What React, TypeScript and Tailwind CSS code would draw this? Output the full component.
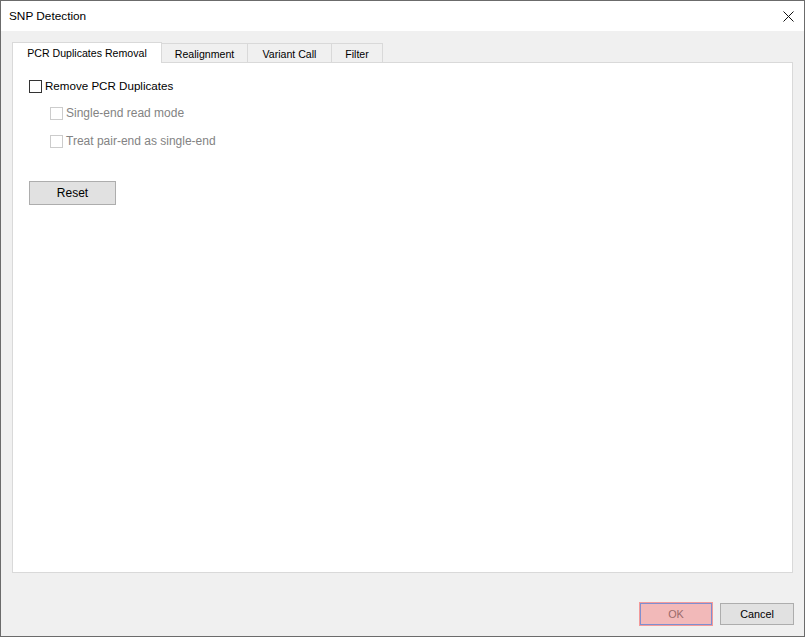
const tabs = ["PCR Duplicates Removal", "Realignment", "Variant Call", "Filter"];
const tabWidths = ["w-[150px]", "w-[87px]", "w-[85px]", "w-[52px]"];

function CheckRow({
  label,
  disabled,
  className,
  textClass,
}: {
  label: string;
  disabled?: boolean;
  className?: string;
  textClass?: string;
}) {
  return (
    <label className={`flex h-[18px] items-center gap-[3px] ${className ?? ""}`}>
      <span
        className={`h-[13px] w-[13px] border bg-white ${disabled ? "border-[#cccccc]" : "border-[#333333]"}`}
      />
      <span className={`${disabled ? "text-[#838383]" : "text-black"} ${textClass ?? ""}`}>{label}</span>
    </label>
  );
}

export default function App() {
  return (
    <div
      className="flex h-[637px] w-[805px] flex-col border border-[#6b6b6b] bg-[#f0f0f0] text-[12px] leading-[18px] text-black"
      style={{ fontFamily: '"Segoe UI", "Liberation Sans", Arial, sans-serif' }}
    >
      <div className="flex h-[30px] items-center justify-between bg-white pl-[8px] pr-[10px]">
        <span className="text-[11.8px]">SNP Detection</span>
        <svg width="11" height="11" viewBox="0 0 11 11">
          <path d="M0.5 0.5 L10.5 10.5 M10.5 0.5 L0.5 10.5" stroke="#111" strokeWidth="1" />
        </svg>
      </div>

      <div className="flex flex-col px-[11px] pt-[11px]">
        <div className="flex h-[20px] items-end text-[10.6px]">
          {tabs.map((t, i) =>
            i === 0 ? (
              <div
                key={t}
                className={`relative z-10 -mb-px flex h-[21px] ${tabWidths[i]} items-center justify-center border border-b-0 border-[#d9d9d9] bg-white`}
              >
                {t}
              </div>
            ) : (
              <div
                key={t}
                className={`-ml-px flex h-[19px] ${tabWidths[i]} items-center justify-center border border-b-0 border-[#d9d9d9] bg-[#f0f0f0] pt-[1px]`}
              >
                {t}
              </div>
            )
          )}
        </div>
        <div className="flex h-[511px] flex-col border border-[#d9d9d9] bg-white pl-[16px] pt-[14px]">
          <CheckRow label="Remove PCR Duplicates" textClass="text-[11.6px]" />
          <CheckRow label="Single-end read mode" disabled className="ml-[21px] mt-[9px]" />
          <CheckRow label="Treat pair-end as single-end" disabled className="ml-[21px] mt-[10px]" />
          <button className="mt-[31px] h-[24px] w-[87px] border border-[#adadad] bg-[#e1e1e1] text-[12px]">
            Reset
          </button>
        </div>
      </div>

      <div className="flex justify-end gap-[7px] pr-[10px] pt-[29px] text-[10.8px]">
        <button className="flex h-[24px] w-[74px] items-center justify-center border border-[#f39a9a] bg-[#f39a9a] p-0">
          <span className="flex h-full w-full items-center justify-center border border-[#7f8fd0] bg-[#f2b9b9] text-[#9a6a6a]">
            OK
          </span>
        </button>
        <button className="mt-[1px] h-[22px] w-[74px] border border-[#adadad] bg-[#e1e1e1]">Cancel</button>
      </div>
    </div>
  );
}
